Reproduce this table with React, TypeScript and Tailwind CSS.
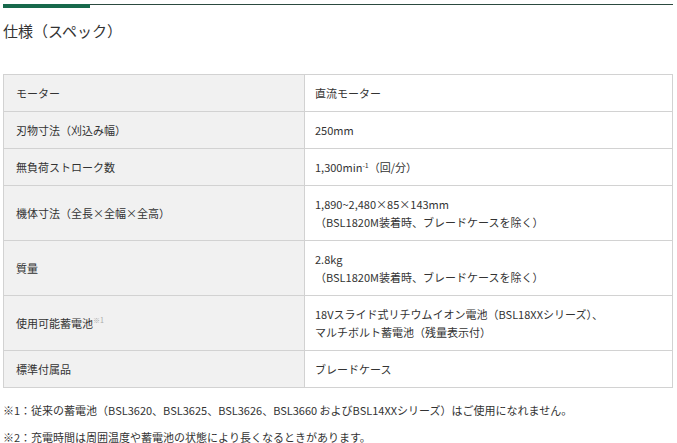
import React from "react";

const rows: { label: React.ReactNode; value: React.ReactNode }[] = [
  { label: "モーター", value: "直流モーター" },
  { label: "刃物寸法（刈込み幅）", value: "250mm" },
  {
    label: "無負荷ストローク数",
    value: (
      <>
        1,300min<sup className="text-[7px] relative -top-[4px] align-baseline">-1</sup>（回/分）
      </>
    ),
  },
  {
    label: "機体寸法（全長×全幅×全高）",
    value: (
      <>
        <div>1,890~2,480×85×143mm</div>
        <div>（BSL1820M装着時、ブレードケースを除く）</div>
      </>
    ),
  },
  {
    label: "質量",
    value: (
      <>
        <div>2.8kg</div>
        <div>（BSL1820M装着時、ブレードケースを除く）</div>
      </>
    ),
  },
  {
    label: (
      <>
        使用可能蓄電池
        <sup className="text-[7px] text-[#aaa] relative -top-[5px] align-baseline">※1</sup>
      </>
    ),
    value: (
      <>
        <div>18Vスライド式リチウムイオン電池（BSL18XXシリーズ）、</div>
        <div>マルチボルト蓄電池（残量表示付）</div>
      </>
    ),
  },
  { label: "標準付属品", value: "ブレードケース" },
];

export default function App() {
  return (
    <div
      className="w-[677px] h-[443px] overflow-hidden bg-white text-[#333] pl-[3px] pr-[4px] pt-[4px]"
      style={{ fontFamily: '"Noto Sans CJK JP", "Noto Sans", sans-serif' }}
    >
      <div className="flex items-start">
        <div className="w-[87px] h-[4px] bg-[#17694c]" />
        <div className="flex-1 h-[1px] bg-[#2c4a40]" />
      </div>
      <h2 className="mt-[12px] text-[15px] leading-[22px] font-normal text-[#333]">仕様（スペック）</h2>
      <div className="mt-[32px] border border-[#d2d2d2] text-[11px] leading-[18px]">
        {rows.map((r, i) => (
          <div key={i} className={`flex ${i > 0 ? "border-t border-[#d2d2d2]" : ""}`}>
            <div className="w-[301px] shrink-0 bg-[#f1f1f1] border-r border-[#d2d2d2] pl-[12px] py-[9px] flex items-center">
              <div>{r.label}</div>
            </div>
            <div className="flex-1 pl-[10px] py-[9px]">{r.value}</div>
          </div>
        ))}
      </div>
      <p className="mt-[13px] text-[11px] leading-[18px]">
        ※1：従来の蓄電池（BSL3620、BSL3625、BSL3626、BSL3660 およびBSL14XXシリーズ）はご使用になれません。
      </p>
      <p className="mt-[9px] text-[11px] leading-[18px]">
        ※2：充電時間は周囲温度や蓄電池の状態により長くなるときがあります。
      </p>
    </div>
  );
}
